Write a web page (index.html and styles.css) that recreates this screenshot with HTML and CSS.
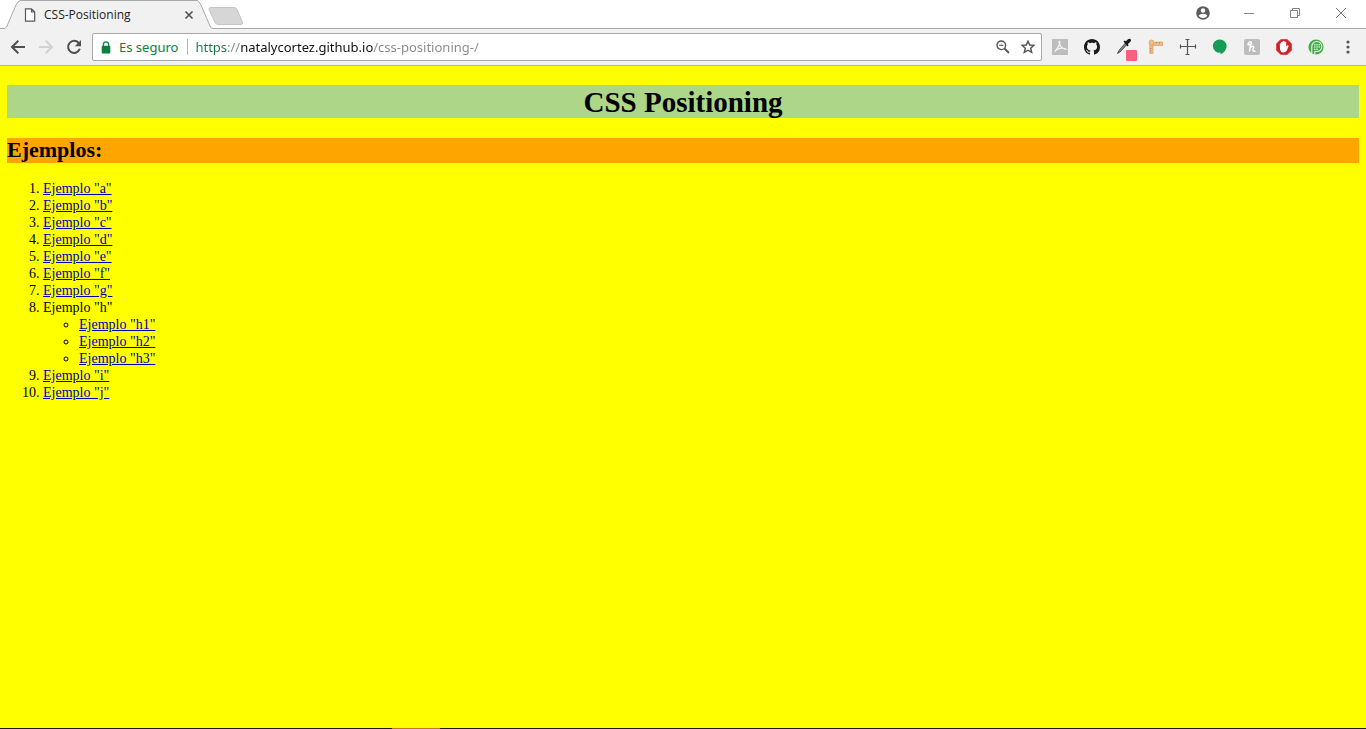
FILE: index.html
```html
<!DOCTYPE html>
<html lang="es">
<head>
<meta charset="utf-8">
<title>CSS-Positioning</title>
<link rel="stylesheet" href="styles.css">
</head>
<body>
<div class="browser">
  <header class="tabstrip">
    <div class="tab">
      <svg class="tab-edge" width="20" height="29" viewBox="0 0 20 29"><path d="M0 29V28.500H4Q6 28 7 26L16 5Q18 .5 20 .5V29Z" fill="#f1f1f1"/><path d="M0 28.500H4Q6 28 7 26L16 5Q18 .5 21 .5" fill="none" stroke="#a9a9a9"/></svg>
      <div class="tab-body">
        <svg width="12" height="14" viewBox="0 0 12 14"><path d="M1.500 .8H7.500L10.700 4V13.200H1.500ZM7.500 .8V4H10.700" fill="#fff" stroke="#5a5a5a" stroke-width="1.200"/></svg>
        <span class="tab-title">CSS-Positioning</span>
        <button class="plain" aria-label="Cerrar pestaña"><svg width="10" height="10" viewBox="0 0 10 10"><path d="M1.500 1.500 8.500 8.500M8.500 1.500 1.500 8.500" stroke="#555" stroke-width="1.700"/></svg></button>
      </div>
      <svg class="tab-edge" width="20" height="29" viewBox="0 0 20 29"><path d="M0 .5Q1 .5 3 5L12 26Q13 28 15 28.500H20V29H0Z" fill="#f1f1f1"/><path d="M-2 .5Q1 .5 3 5L12 26Q13 28.500 15 28.500H20" fill="none" stroke="#a9a9a9"/></svg>
    </div>
    <button class="plain newtab" aria-label="Nueva pestaña"><svg width="36" height="18" viewBox="0 0 36 18"><path d="M3 .5H26Q28 .5 29 2.500L34.500 15Q35 17.500 33 17.500H10Q8 17.500 7 15.500L1 2.500Q.5 .5 3 .5Z" fill="#d6d6d6" stroke="#c5c5c5"/></svg></button>
    <div class="window-buttons">
      <button class="plain" aria-label="Perfil"><svg width="14" height="14" viewBox="0 0 14 14"><circle cx="7" cy="7" r="6.800" fill="#5c5c5c"/><circle cx="7" cy="4.500" r="2.200" fill="#fff"/><path d="M2.600 9.700Q3.500 7.800 7 7.800T11.400 9.700Q9.800 12 7 12T2.600 9.700Z" fill="#fff"/></svg></button>
      <button class="plain" aria-label="Minimizar"><svg width="12" height="12" viewBox="0 0 12 12"><path d="M1 6.500H11" stroke="#8a8a8a"/></svg></button>
      <button class="plain" aria-label="Restaurar"><svg width="12" height="12" viewBox="0 0 12 12"><path d="M1.500 3.500H8.500V10.500H1.500ZM3.500 3.500V1.500H10.500V8.500H8.500" fill="none" stroke="#808080"/></svg></button>
      <button class="plain" aria-label="Cerrar"><svg width="12" height="12" viewBox="0 0 12 12"><path d="M1 1 11 11M11 1 1 11" stroke="#707070"/></svg></button>
    </div>
  </header>
  <nav class="toolbar">
    <div class="nav-buttons">
      <button class="plain" aria-label="Atrás"><svg width="16" height="16" viewBox="0 0 16 16"><path d="M15 8H2.500M8.300 1.800 2 8 8.300 14.200" fill="none" stroke="#505050" stroke-width="2"/></svg></button>
      <button class="plain" aria-label="Adelante"><svg width="16" height="16" viewBox="0 0 16 16"><path d="M1 8H13.500M7.700 1.800 14 8 7.700 14.200" fill="none" stroke="#d2d2d2" stroke-width="2"/></svg></button>
      <button class="plain" aria-label="Recargar"><svg width="16" height="16" viewBox="0 0 16 16"><path d="M12.700 4A6 6 0 1 0 13.800 9.800" fill="none" stroke="#505050" stroke-width="2"/><path d="M15 1V7.200H8.800Z" fill="#505050"/></svg></button>
    </div>
    <div class="omnibox">
      <svg width="10" height="13" viewBox="0 0 10 13"><path d="M2.400 6V3.400A2.600 2.600 0 0 1 7.600 3.400V6" fill="none" stroke="#0b8043" stroke-width="1.300"/><rect x=".7" y="4.800" width="8.600" height="7.800" rx="1" fill="#0b8043"/></svg>
      <span class="secure">Es seguro</span>
      <input class="url" type="text" aria-label="Dirección" value="https://natalycortez.github.io/css-positioning-/" spellcheck="false">
      <button class="plain" aria-label="Zoom"><svg width="14" height="14" viewBox="0 0 14 14"><circle cx="5.300" cy="5.300" r="4.300" fill="none" stroke="#555" stroke-width="1.400"/><path d="M8.500 8.500 13 13" stroke="#555" stroke-width="1.800"/><path d="M3.300 5.300H7.300" stroke="#555" stroke-width="1.200"/></svg></button>
      <button class="plain" aria-label="Favoritos"><svg width="14" height="14" viewBox="0 0 14 14"><path d="M7 1.200 8.700 5 12.900 5.400 9.700 8.200 10.700 12.400 7 10.200 3.300 12.400 4.300 8.200 1.100 5.400 5.300 5Z" fill="none" stroke="#505050" stroke-width="1.400"/></svg></button>
    </div>
    <div class="extensions">
      <button class="plain" aria-label="PDF"><svg width="20" height="20" viewBox="0 0 20 20"><path d="M2 2H18V18H2Z" fill="#bdbdbd"/><path d="M9 4.500C11 4.500 9.500 9 5 14.500C6 12 12 10 15.500 12C12 12 9 8 9 4.500Z" fill="none" stroke="#f4f4f4" stroke-width="1.300"/></svg></button>
      <button class="plain" aria-label="GitHub"><svg width="20" height="20" viewBox="0 0 20 20"><path transform="translate(2 2)" fill="#1a1a1a" d="M8 0C3.580 0 0 3.580 0 8c0 3.540 2.290 6.530 5.470 7.590.4.070.55-.17.55-.38 0-.19-.01-.82-.01-1.490-2.010.37-2.530-.49-2.690-.94-.09-.23-.48-.94-.82-1.130-.28-.15-.68-.52-.01-.53.63-.01 1.080.58 1.230.82.720 1.210 1.870.87 2.330.66.070-.52.28-.87.510-1.070-1.780-.2-3.640-.89-3.640-3.950 0-.87.310-1.590.82-2.150-.08-.2-.36-1.020.08-2.120 0 0 .67-.21 2.200.82.640-.18 1.320-.27 2-.27s1.360.09 2 .27c1.530-1.040 2.200-.82 2.200-.82.440 1.100.16 1.920.08 2.120.51.560.82 1.270.82 2.150 0 3.070-1.870 3.750-3.650 3.950.29.250.54.730.54 1.480 0 1.070-.01 1.930-.01 2.200 0 .21.150.46.550.38A8.010 8.010 0 0 0 16 8c0-4.420-3.580-8-8-8Z"/></svg></button>
      <button class="plain" aria-label="Selector de color"><svg class="picker" width="20" height="24" viewBox="0 0 20 24"><path d="M3.500 18.500Q4.500 15.500 7 13L11 8.500 12.500 10 8.500 14.500Q6 17.500 3.500 18.500Z" fill="#6d8a78" stroke="#344038" stroke-width=".8"/><path d="M9.500 6.500 10.800 5.500 12 6.200 14 4.200Q16 3 16.800 4.500T16 7L14 9 14.500 10.500 13.500 11.500Z" fill="#181818"/><rect x="12" y="15" width="11" height="11" rx="1" fill="#f7617f"/></svg></button>
      <button class="plain" aria-label="Regla"><svg width="20" height="20" viewBox="0 0 20 20"><path d="M3.800 5.500V16.500H7V8.500H16.500V5Z" fill="#ecba84" stroke="#d9a36c" stroke-width=".8"/><circle cx="5.500" cy="5.500" r="2.500" fill="#efbd88" stroke="#d9a36c" stroke-width=".8"/><path d="M10.500 5V6.500M13.500 5V6.500M4 11.500H5.500M4 14H5.500" stroke="#bb8754" stroke-width=".8"/></svg></button>
      <button class="plain" aria-label="Medidas"><svg width="20" height="20" viewBox="0 0 20 20"><path d="M2.500 9.500H17.500M9.500 2.500V17.500M2.500 7.500V11.500M17.500 7.500V11.500M7.500 2.500H11.500M7.500 17.500H11.500" stroke="#555" stroke-width="1.200"/></svg></button>
      <button class="plain" aria-label="Hangouts"><svg width="20" height="20" viewBox="0 0 20 20"><path d="M10 2.500A6.600 6.600 0 0 1 16.600 9C16.600 13 13.500 16 10.500 17.500V15.600A6.600 6.600 0 1 1 10 2.500Z" fill="#169c56"/></svg></button>
      <button class="plain" aria-label="Honey"><svg width="20" height="20" viewBox="0 0 20 20"><rect x="2" y="2" width="16" height="16" rx="2" fill="#bdbdbd"/><path d="M7.500 14.500C8 11 8.500 8 9.500 5M9.500 5Q7 4 6 7.500Q8.500 8.500 10 6M8 11.500Q9.500 8.500 11.500 9.500Q12 10.500 11 12.500Q10.500 15 13.500 14" fill="none" stroke="#fff" stroke-width="1.400"/></svg></button>
      <button class="plain" aria-label="AdBlock"><svg width="20" height="20" viewBox="0 0 20 20"><path d="M6.800 2.500H13.200L17.500 6.800V13.200L13.200 17.500H6.800L2.500 13.200V6.800Z" fill="#cd2029" stroke="#e34b50"/><path d="M5.800 7Q6.200 5.800 7.200 6.800V5Q8 4 8.800 5V4.300Q9.600 3.400 10.500 4.300V5Q11.500 4 12.200 5.200V9.500L13.500 8.300Q15 8 14.500 9.500L12.800 13.500Q11.500 15.800 9 15.500T6 12.500Z" fill="#fff"/></svg></button>
      <button class="plain" aria-label="Pushbullet"><svg width="20" height="20" viewBox="0 0 20 20"><circle cx="10" cy="10" r="7.600" fill="#45ad48"/><path d="M5.800 16.500V9.500A5 5 0 1 1 10.800 14.500H8.800V17.500" fill="none" stroke="#f1f1f1" stroke-width="1.100"/><g fill="#e9fbe9"><circle cx="8.800" cy="7.800" r=".8"/><circle cx="11" cy="7.800" r=".8"/><circle cx="13.200" cy="7.800" r=".8"/><circle cx="8.800" cy="10" r=".8"/><circle cx="11" cy="10" r=".8"/><circle cx="13.200" cy="10" r=".8"/><circle cx="8.800" cy="12.200" r=".8"/><circle cx="11" cy="12.200" r=".8"/></g></svg></button>
      <button class="plain" aria-label="Menú"><svg width="20" height="20" viewBox="0 0 20 20"><g fill="#555"><circle cx="10" cy="5" r="1.600"/><circle cx="10" cy="10" r="1.600"/><circle cx="10" cy="15" r="1.600"/></g></svg></button>
    </div>
  </nav>
  <main class="page">
    <h1 class="title">CSS Positioning</h1>
    <h2 class="subtitle">Ejemplos:</h2>
    <ol class="examples">
      <li><a href="#a">Ejemplo "a"</a></li>
      <li><a href="#b">Ejemplo "b"</a></li>
      <li><a href="#c">Ejemplo "c"</a></li>
      <li><a href="#d">Ejemplo "d"</a></li>
      <li><a href="#e">Ejemplo "e"</a></li>
      <li><a href="#f">Ejemplo "f"</a></li>
      <li><a href="#g">Ejemplo "g"</a></li>
      <li>Ejemplo "h"
        <ul class="nested">
          <li><a href="#h1">Ejemplo "h1"</a></li>
          <li><a href="#h2">Ejemplo "h2"</a></li>
          <li><a href="#h3">Ejemplo "h3"</a></li>
        </ul>
      </li>
      <li><a href="#i">Ejemplo "i"</a></li>
      <li><a href="#j">Ejemplo "j"</a></li>
    </ol>
  </main>
  <footer class="taskbar"><div class="taskbar-active"></div></footer>
</div>
</body>
</html>
```
FILE: styles.css
```css
* { box-sizing: border-box; }
body { margin: 0; }
svg { display: block; flex: none; }
.browser {
  display: flex;
  flex-direction: column;
  min-height: 100vh;
  font-family: "Open Sans", "Noto Sans", sans-serif;
}
.plain {
  display: flex;
  align-items: center;
  justify-content: center;
  padding: 0;
  border: 0;
  background: none;
}
.tabstrip {
  display: flex;
  height: 29px;
  padding-right: 2px;
  background: linear-gradient(#a9a9a9, #a9a9a9) bottom / 100% 1px no-repeat #fff;
}
.tab { display: flex; }
.tab-body {
  display: flex;
  align-items: center;
  width: 178px;
  padding: 0 4px;
  border-top: 1px solid #a9a9a9;
  background: #f1f1f1;
}
.tab-title {
  flex: 1;
  padding-left: 8px;
  font-size: 12px;
  line-height: 16px;
  color: #222;
}
.newtab { align-self: center; margin-left: -10px; padding-top: 2px; }
.window-buttons {
  display: flex;
  margin-left: auto;
  padding-bottom: 3px;
}
.window-buttons .plain { width: 46px; }
.toolbar {
  display: flex;
  align-items: center;
  height: 37px;
  padding: 0 8px 0 10px;
  border-bottom: 1px solid #b5b0b5;
  background: #f1f1f1;
}
.nav-buttons { display: flex; gap: 12px; width: 82px; }
.omnibox {
  display: flex;
  flex: 1;
  align-items: center;
  gap: 11px;
  height: 28px;
  padding: 0 6px 0 8px;
  border: 1px solid #a9a9a9;
  border-radius: 2px;
  background: #fff;
}
.secure {
  margin-left: -3px;
  padding-right: 9px;
  border-right: 1px solid #b5b5b5;
  font: 13px/16px "Noto Sans", sans-serif;
  color: #0b8043;
}
.url {
  flex: 1;
  min-width: 0;
  margin-left: -4px;
  padding: 0;
  border: 0;
  outline: 0;
  font: 13px/18px "Noto Sans", sans-serif;
  color: transparent;
  caret-color: #000;
  background: linear-gradient(90deg, #0b8043 33px, #888 33px 45px, #111 45px 178px, #888 178px);
  -webkit-background-clip: text;
  background-clip: text;
}
.extensions { display: flex; gap: 12px; padding-left: 8px; }
.extensions .plain { width: 20px; height: 24px; }
.picker { overflow: visible; }
.page {
  flex: 1;
  padding: 19px 7px;
  background: #ff0;
  font-family: "Liberation Serif", "Times New Roman", serif;
  font-size: 14px;
  line-height: 17px;
  color: #000;
}
.title {
  margin: 0 0 20px;
  padding-top: 1px;
  background: #aed688;
  font-size: 29px;
  line-height: 32px;
  text-align: center;
}
.subtitle {
  margin: 0 0 17px;
  padding-bottom: 2px;
  background: #ffa500;
  font-size: 22px;
  line-height: 23px;
}
.examples { margin: 0; padding-left: 36px; }
.nested { margin: 0; padding-left: 36px; list-style: circle; }
.page a { color: #0000b4; }
.taskbar { height: 1px; padding-left: 392px; background: #1a1a1a; }
.taskbar-active { width: 48px; height: 1px; background: #c77800; }
```
